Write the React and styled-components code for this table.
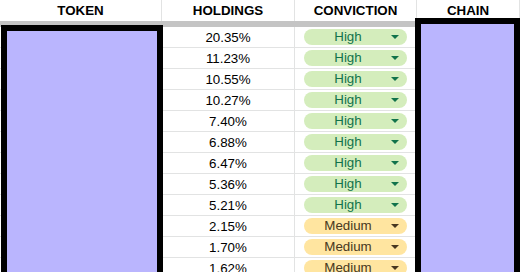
import React from 'react'
import styled, { createGlobalStyle } from 'styled-components'

const GlobalStyle = createGlobalStyle`
  html, body {
    margin: 0;
    padding: 0;
    background: #ffffff;
  }
  body {
    font-family: "Liberation Sans", Arial, sans-serif;
    overflow: hidden;
  }
`

const rows = [
  { pct: '20.35%', level: 'High' },
  { pct: '11.23%', level: 'High' },
  { pct: '10.55%', level: 'High' },
  { pct: '10.27%', level: 'High' },
  { pct: '7.40%', level: 'High' },
  { pct: '6.88%', level: 'High' },
  { pct: '6.47%', level: 'High' },
  { pct: '5.36%', level: 'High' },
  { pct: '5.21%', level: 'High' },
  { pct: '2.15%', level: 'Medium' },
  { pct: '1.70%', level: 'Medium' },
  { pct: '1.62%', level: 'Medium' },
]

const chipColors = {
  High: { bg: '#d4edbc', fg: '#11734b' },
  Medium: { bg: '#ffe5a0', fg: '#473821' },
}

const Sheet = styled.div`
  position: relative;
  width: 520px;
  height: 272px;
  overflow: hidden;
`

const Row = styled.div`
  display: grid;
  grid-template-columns: 162px 133px 122px 1fr;
  height: 21px;
`

const Cell = styled.div`
  display: flex;
  align-items: center;
  justify-content: center;
  box-sizing: border-box;
  border-right: 1px solid #e2e3e3;
  border-bottom: ${p => (p.$header ? 'none' : '1px solid #e2e3e3')};
  font-size: 13.33px;
  font-weight: ${p => (p.$header ? 700 : 400)};
  color: #000000;
  padding: ${p => (p.$chip ? '0 9px' : '0')};
`

const FreezeBar = styled.div`
  height: 6px;
  background: #c4c4c4;
`

const Chip = styled.div`
  display: flex;
  align-items: center;
  width: 100%;
  height: 16px;
  border-radius: 8px;
  background: ${p => chipColors[p.$level].bg};
  color: ${p => chipColors[p.$level].fg};
  padding-right: 8px;
  box-sizing: border-box;
`

const ChipText = styled.span`
  flex: 1;
  text-align: center;
  font-size: 13.33px;
  line-height: 16px;
  padding-left: 1px;
`

const Caret = styled.span`
  width: 0;
  height: 0;
  border-left: 4px solid transparent;
  border-right: 4px solid transparent;
  border-top: 4px solid ${p => chipColors[p.$level].fg};
`

const Redaction = styled.div`
  position: absolute;
  box-sizing: border-box;
  left: ${p => p.$left}px;
  top: ${p => p.$top}px;
  width: ${p => p.$width}px;
  height: 300px;
  background: #bab5fe;
  border: 6px solid #000000;
`

export default function App() {
  return (
    <>
      <GlobalStyle />
      <Sheet>
        <Row>
          <Cell $header>TOKEN</Cell>
          <Cell $header>HOLDINGS</Cell>
          <Cell $header>CONVICTION</Cell>
          <Cell $header>CHAIN</Cell>
        </Row>
        <FreezeBar />
        {rows.map((r, i) => (
          <Row key={i}>
            <Cell />
            <Cell>{r.pct}</Cell>
            <Cell $chip>
              <Chip $level={r.level}>
                <ChipText>{r.level}</ChipText>
                <Caret $level={r.level} />
              </Chip>
            </Cell>
            <Cell />
          </Row>
        ))}
        <Redaction $left={1} $top={25} $width={162} />
        <Redaction $left={415} $top={18} $width={105} />
      </Sheet>
    </>
  )
}
